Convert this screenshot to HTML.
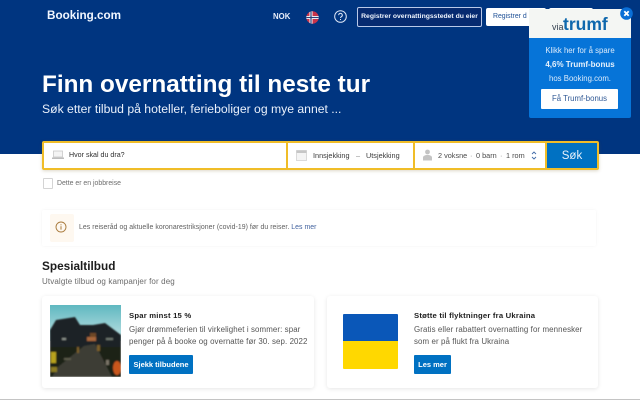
<!DOCTYPE html>
<html><head><meta charset="utf-8">
<style>
html,body{margin:0;padding:0}
body{width:640px;height:400px;overflow:hidden;position:relative;background:#fff;font-family:"Liberation Sans",sans-serif;color:#262626}
.a{position:absolute;white-space:nowrap}
.ls{font-family:"Liberation Sans",sans-serif}
</style></head><body>
<div class="a" style="left:0;top:0;width:640px;height:154px;background:#003580"></div>

<div class="a ls" style="left:47px;top:8px;font-size:11.7px;line-height:16px;font-weight:bold;color:#f2f7ff">Booking.com</div>
<div class="a ls" style="left:273px;top:11px;font-size:7.8px;line-height:12px;font-weight:bold;color:#e8eefa">NOK</div>
<svg class="a" style="left:306px;top:11px" width="13" height="13" viewBox="0 0 13 13"><defs><clipPath id="c"><circle cx="6.5" cy="6.5" r="6.2"/></clipPath></defs><g clip-path="url(#c)"><rect width="13" height="13" fill="#c8334a"/><rect x="3.5" width="3" height="13" fill="#fff"/><rect y="5" width="13" height="3" fill="#fff"/><rect x="4.4" width="1.2" height="13" fill="#2b3f78"/><rect y="5.9" width="13" height="1.2" fill="#2b3f78"/></g></svg>
<svg class="a" style="left:334px;top:10px" width="13" height="13" viewBox="0 0 13 13"><circle cx="6.5" cy="6.5" r="5.8" fill="none" stroke="#dfe8f7" stroke-width="1"/><path d="M4.7 5.2a1.8 1.8 0 1 1 2.7 1.5c-.6.4-.9.7-.9 1.3" fill="none" stroke="#dfe8f7" stroke-width="1"/><rect x="6" y="9" width="1" height="1" fill="#dfe8f7"/></svg>
<div class="a ls" style="left:357px;top:7px;width:123px;height:18px;border:1px solid #b9c8e8;border-radius:2px;background:#062a70;color:#eef3fc;font-size:6.8px;font-weight:bold;line-height:18px;text-align:center">Registrer overnattingsstedet du eier</div>
<div class="a ls" style="left:486px;top:8px;width:60px;height:18px;background:#fff;border-radius:2px;color:#1d4f96;font-size:6.9px;line-height:18px;padding-left:7px;box-sizing:border-box">Registrer d</div>
<div class="a" style="left:549px;top:8px;width:44px;height:18px;background:#fff;border-radius:2px"></div>

<div class="a" style="left:529px;top:9px;width:102px;height:29px;background:#f4f6f3"></div>
<div class="a ls" style="left:552px;top:21px;font-size:9px;line-height:12px;color:#33404f">vi<span style="letter-spacing:-.5px">a</span></div>
<div class="a ls" style="left:563px;top:13px;font-size:17.5px;line-height:22px;font-weight:bold;color:#0f68ad">trumf</div>
<div class="a" style="left:529px;top:38px;width:102px;height:80px;background:#0674d8;border-radius:0 0 2px 2px"></div>
<div class="a ls" style="left:529px;top:45px;width:102px;text-align:center;font-size:7.8px;line-height:12px;color:#dcebfb">Klikk her for å spare</div>
<div class="a ls" style="left:529px;top:59px;width:102px;text-align:center;font-size:8px;line-height:12px;font-weight:bold;color:#e6f1fc">4,6% Trumf-bonus</div>
<div class="a ls" style="left:529px;top:73px;width:102px;text-align:center;font-size:7.8px;line-height:12px;color:#dcebfb">hos Booking.com.</div>
<div class="a ls" style="left:541px;top:89px;width:77px;height:20px;background:#fff;border-radius:1px;text-align:center;font-size:7.8px;line-height:20px;color:#315a96">Få Trumf-bonus</div>
<svg class="a" style="left:620px;top:7px" width="13" height="13" viewBox="0 0 13 13"><circle cx="6.5" cy="6.5" r="6.3" fill="#0a6fd6"/><path d="M4.3 4.3l4.4 4.4M8.7 4.3l-4.4 4.4" stroke="#fff" stroke-width="1.8"/></svg>

<div class="a ls" style="left:42px;top:70px;font-size:24.3px;line-height:30px;font-weight:bold;color:#fff">Finn overnatting til neste tur</div>
<div class="a ls" style="left:42px;top:101px;font-size:12.2px;line-height:16px;color:#eaf1fb">Søk etter tilbud på hoteller, ferieboliger og mye annet ...</div>

<div class="a" style="left:42px;top:141px;width:557px;height:29px;background:#f0bd28;border-radius:2px;box-shadow:0 1px 3px rgba(120,100,40,.25)"></div>
<div class="a" style="left:44px;top:143px;width:242px;height:25px;background:#fff"></div>
<div class="a" style="left:288px;top:143px;width:125px;height:25px;background:#fff"></div>
<div class="a" style="left:415px;top:143px;width:130px;height:25px;background:#fff"></div>
<div class="a" style="left:547px;top:143px;width:50px;height:25px;background:#0071c2"></div>
<svg class="a" style="left:52px;top:150px" width="12" height="10" viewBox="0 0 12 10"><rect x="1.5" y="1" width="9" height="6" fill="#f4f4f4" stroke="#c9c9c9" stroke-width=".8"/><rect x="0" y="7.5" width="12" height="1.5" fill="#bdbdbd"/></svg>
<div class="a ls" style="left:69px;top:150px;font-size:7.1px;line-height:11px;color:#2e2e2e">Hvor skal du dra?</div>
<svg class="a" style="left:296px;top:150px" width="11" height="11" viewBox="0 0 11 11"><rect x=".5" y=".5" width="10" height="10" fill="#f4f4f4" stroke="#d2d2d2" stroke-width=".8"/><rect x=".5" y=".5" width="10" height="2.5" fill="#c6c6c6"/></svg>
<div class="a ls" style="left:313px;top:150px;font-size:7.3px;line-height:11px;color:#3a3a3a">Innsjekking</div>
<div class="a ls" style="left:356px;top:150px;font-size:7.3px;line-height:11px;color:#8a8a8a">–</div>
<div class="a ls" style="left:366px;top:150px;font-size:7.3px;line-height:11px;color:#3a3a3a">Utsjekking</div>
<svg class="a" style="left:422px;top:149px" width="11" height="12" viewBox="0 0 11 12"><circle cx="5.5" cy="3" r="2.4" fill="#c4c4c4"/><path d="M1 11.5V8.5C1 7 3 6 5.5 6S10 7 10 8.5v3z" fill="#c4c4c4"/></svg>
<div class="a ls" style="left:438px;top:150px;font-size:7.3px;line-height:11px;color:#4a4a4a">2 voksne</div>
<div class="a ls" style="left:470px;top:150px;font-size:7.3px;line-height:11px;color:#8a8a8a">·</div>
<div class="a ls" style="left:476px;top:150px;font-size:7.3px;line-height:11px;color:#4a4a4a">0 barn</div>
<div class="a ls" style="left:500px;top:150px;font-size:7.3px;line-height:11px;color:#8a8a8a">·</div>
<div class="a ls" style="left:506px;top:150px;font-size:7.3px;line-height:11px;color:#4a4a4a">1 rom</div>
<svg class="a" style="left:531px;top:151px" width="6" height="9" viewBox="0 0 6 9"><path d="M1 3l2-2 2 2M1 6l2 2 2-2" fill="none" stroke="#3f6aa8" stroke-width=".9"/></svg>
<div class="a ls" style="left:547px;top:148px;width:50px;text-align:center;font-size:11.5px;line-height:17px;color:#e8f2fb">Søk</div>

<div class="a" style="left:43px;top:178px;width:8px;height:9px;border:1px solid #d4d4d4;border-radius:1px;background:#fff"></div>
<div class="a ls" style="left:57px;top:178px;font-size:6.9px;line-height:11px;color:#6d6d6d">Dette er en jobbreise</div>

<div class="a" style="left:42px;top:210px;width:554px;height:36px;background:#fff;box-shadow:0 0 3px rgba(0,0,0,.05);border-radius:2px"></div>
<div class="a" style="left:50px;top:214px;width:24px;height:28px;background:#fef8f0;border-radius:2px"></div>
<svg class="a" style="left:55px;top:221px" width="12" height="12" viewBox="0 0 12 12"><circle cx="6" cy="6" r="5" fill="none" stroke="#a8793a" stroke-width=".9"/><rect x="5.5" y="5.2" width="1" height="3.4" fill="#a8793a"/><rect x="5.5" y="3.3" width="1" height="1" fill="#a8793a"/></svg>
<div class="a ls" style="left:79px;top:222px;font-size:6.9px;line-height:11px;color:#606060;letter-spacing:.05px">Les reiseråd og aktuelle koronarestriksjoner (covid-19) før du reiser. <span style="color:#3e5f9c">Les mer</span></div>

<div class="a ls" style="left:42px;top:258px;font-size:11.8px;line-height:16px;font-weight:bold;color:#1c1c1c">Spesialtilbud</div>
<div class="a ls" style="left:42px;top:276px;font-size:8px;line-height:11px;color:#6b6b6b;letter-spacing:.12px">Utvalgte tilbud og kampanjer for deg</div>

<div class="a" style="left:42px;top:296px;width:272px;height:92px;background:#fff;border-radius:3px;box-shadow:0 1px 4px rgba(0,0,0,.1)"></div>
<svg class="a" style="left:50px;top:305px" width="71" height="72" viewBox="0 0 71 72">
<defs><linearGradient id="s" x1="0" y1="0" x2="0" y2="1"><stop offset="0" stop-color="#5fb8c0"/><stop offset="1" stop-color="#c2e2e4"/></linearGradient><filter id="b"><feGaussianBlur stdDeviation=".7"/></filter></defs>
<rect width="71" height="36" fill="url(#s)"/>
<g filter="url(#b)">
<rect y="34" width="71" height="38" fill="#1b2115"/>
<path d="M0 25L6 15 25 12 30 20 43 20 55 18 71 30V42H0z" fill="#1f2426"/>
<path d="M2 72L8 62 34 41 45 39 62 72z" fill="#3c3d36"/>
<path d="M37 32h9v4H37z" fill="#a8663a"/><path d="M40 28h6v4h-6z" fill="#6e4626"/>
<rect x="1" y="47" width="5" height="11" fill="#b7a21e"/><rect x="1" y="62" width="6" height="5" fill="#8a7a20"/>
<ellipse cx="67" cy="63" rx="4" ry="7" fill="#c8561f"/>
<rect x="12" y="33" width="4" height="2" fill="#8a928a"/><rect x="56" y="33" width="7" height="2" fill="#6e7870"/>
<rect x="27" y="42" width="2" height="6" fill="#7d6029"/><rect x="47" y="40" width="3" height="6" fill="#7d6029"/><rect x="56" y="55" width="3" height="5" fill="#7a7568"/><rect x="14" y="53" width="7" height="2" fill="#5c5c4c"/>
</g>
</svg>
<div class="a ls" style="left:129px;top:310px;font-size:7.7px;line-height:11px;font-weight:bold;color:#1c1c1c;letter-spacing:.2px">Spar minst 15 %</div>
<div class="a ls" style="left:129px;top:324px;font-size:7.9px;line-height:12px;color:#555;letter-spacing:.1px">Gjør drømmeferien til virkelighet i sommer: spar<br>penger på å booke og overnatte før 30. sep. 2022</div>
<div class="a ls" style="left:129px;top:355px;width:64px;height:19px;background:#0071c2;border-radius:1px;text-align:center;font-size:7.5px;line-height:19px;font-weight:bold;color:#fff">Sjekk tilbudene</div>

<div class="a" style="left:327px;top:296px;width:271px;height:92px;background:#fff;border-radius:3px;box-shadow:0 1px 4px rgba(0,0,0,.1)"></div>
<div class="a" style="left:343px;top:314px;width:55px;height:27px;background:#0a57b8;border-radius:1px 1px 0 0"></div>
<div class="a" style="left:343px;top:341px;width:55px;height:28px;background:#ffd800;border-radius:0 0 1px 1px"></div>
<div class="a ls" style="left:414px;top:310px;font-size:7.7px;line-height:11px;font-weight:bold;color:#1c1c1c;letter-spacing:.2px">Støtte til flyktninger fra Ukraina</div>
<div class="a ls" style="left:414px;top:324px;font-size:7.9px;line-height:12px;color:#555;letter-spacing:.1px">Gratis eller rabattert overnatting for mennesker<br>som er på flukt fra Ukraina</div>
<div class="a ls" style="left:414px;top:355px;width:37px;height:19px;background:#0071c2;border-radius:1px;text-align:center;font-size:7.5px;line-height:19px;font-weight:bold;color:#fff">Les mer</div>
<div class="a" style="left:0;top:399px;width:640px;height:1px;background:#c4c4c4"></div>
</body></html>
